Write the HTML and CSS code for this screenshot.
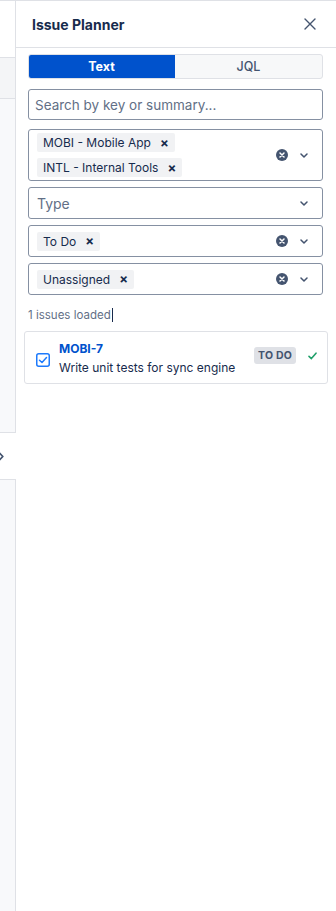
FILE: index.html
```html
<!DOCTYPE html>
<html>
<head>
<meta charset="utf-8">
<link rel="stylesheet" href="styles.css">
</head>
<body>
<div class="app">
  <div class="rail">
    <div class="rail-top"></div>
    <div class="rail-bar"></div>
    <div class="rail-box"></div>
    <div class="rail-gap"><svg class="rail-chev" width="5" height="9" viewBox="0 0 5 9"><path d="M0.5 1L3.8 4.5L0.5 8" stroke="#44546f" stroke-width="1.8" fill="none" stroke-linecap="round" stroke-linejoin="round"/></svg></div>
    <div class="rail-box2"></div>
  </div>
  <div class="panel">
    <div class="header">
      <span class="title">Issue Planner</span>
      <svg class="close" width="12" height="12" viewBox="0 0 12 12"><path d="M1 1L11 11M11 1L1 11" stroke="#44546f" stroke-width="1.4" stroke-linecap="round"/></svg>
    </div>
    <div class="body">
      <div class="tabs">
        <div class="tab tab-active">Text</div>
        <div class="tab">JQL</div>
      </div>
      <div class="field search"><span class="placeholder search-ph">Search by key or summary...</span></div>
      <div class="field select multi">
        <div class="tags">
          <span class="tag">MOBI - Mobile App<span class="tag-x">×</span></span>
          <span class="tag">INTL - Internal Tools<span class="tag-x">×</span></span>
        </div>
        <div class="icons">
          <svg class="clear" width="12" height="12" viewBox="0 0 12 12"><circle cx="6" cy="6" r="6" fill="#44546f"/><path d="M4 4L8 8M8 4L4 8" stroke="#fff" stroke-width="1.5" stroke-linecap="round"/></svg>
          <svg class="chev" width="8" height="5" viewBox="0 0 8 5"><path d="M1 1L4 4L7 1" stroke="#44546f" stroke-width="1.5" fill="none" stroke-linecap="round" stroke-linejoin="round"/></svg>
        </div>
      </div>
      <div class="field select">
        <div class="tags"><span class="placeholder">Type</span></div>
        <div class="icons">
          <svg class="chev" width="8" height="5" viewBox="0 0 8 5"><path d="M1 1L4 4L7 1" stroke="#44546f" stroke-width="1.5" fill="none" stroke-linecap="round" stroke-linejoin="round"/></svg>
        </div>
      </div>
      <div class="field select">
        <div class="tags"><span class="tag">To Do<span class="tag-x">×</span></span></div>
        <div class="icons">
          <svg class="clear" width="12" height="12" viewBox="0 0 12 12"><circle cx="6" cy="6" r="6" fill="#44546f"/><path d="M4 4L8 8M8 4L4 8" stroke="#fff" stroke-width="1.5" stroke-linecap="round"/></svg>
          <svg class="chev" width="8" height="5" viewBox="0 0 8 5"><path d="M1 1L4 4L7 1" stroke="#44546f" stroke-width="1.5" fill="none" stroke-linecap="round" stroke-linejoin="round"/></svg>
        </div>
      </div>
      <div class="field select">
        <div class="tags"><span class="tag">Unassigned<span class="tag-x">×</span></span></div>
        <div class="icons">
          <svg class="clear" width="12" height="12" viewBox="0 0 12 12"><circle cx="6" cy="6" r="6" fill="#44546f"/><path d="M4 4L8 8M8 4L4 8" stroke="#fff" stroke-width="1.5" stroke-linecap="round"/></svg>
          <svg class="chev" width="8" height="5" viewBox="0 0 8 5"><path d="M1 1L4 4L7 1" stroke="#44546f" stroke-width="1.5" fill="none" stroke-linecap="round" stroke-linejoin="round"/></svg>
        </div>
      </div>
      <div class="status">1 issues loaded<span class="caret"></span></div>
      <div class="card">
        <svg class="checkbox" width="14" height="14" viewBox="0 0 14 14"><rect x="0.75" y="0.75" width="12.5" height="12.5" rx="2" fill="#fff" stroke="#1d7afc" stroke-width="1.5"/><path d="M3.5 7.2L6 9.5L10.5 4.5" stroke="#1d7afc" stroke-width="1.5" fill="none" stroke-linecap="round" stroke-linejoin="round"/></svg>
        <div class="card-text">
          <div class="key">MOBI-7</div>
          <div class="summary">Write unit tests for sync engine</div>
        </div>
        <span class="lozenge">TO DO</span>
        <svg class="done" width="9" height="8" viewBox="0 0 9 8"><path d="M1 4.3L3.4 6.6L8 1.2" stroke="#22a06b" stroke-width="1.6" fill="none" stroke-linecap="round" stroke-linejoin="round"/></svg>
      </div>
    </div>
  </div>
</div>
</body>
</html>
```

FILE: styles.css
```css
* { box-sizing: border-box; }
html, body { margin: 0; padding: 0; background: #fff; }
body {
  font-family: Inter, "Noto Sans", "Liberation Sans", sans-serif;
  color: #172b4d;
}
.app {
  display: flex;
  height: 911px;
  border-top: 1px solid #dfe1e6;
}
.rail {
  width: 16px;
  display: flex;
  flex-direction: column;
  flex-shrink: 0;
}
.rail-top {
  height: 56px;
  border-right: 1px solid #dfe1e6;
}
.rail-bar {
  height: 42px;
  background: #f4f5f7;
  border-top: 1px solid #dfe1e6;
  border-bottom: 1px solid #dfe1e6;
  border-right: 1px solid #dfe1e6;
}
.rail-box {
  height: 334px;
  background: #f8f9fb;
  border-right: 1px solid #dfe1e6;
  border-bottom: 1px solid #dfe1e6;
}
.rail-gap {
  height: 46px;
  display: flex;
  align-items: center;
}
.rail-chev {
  margin-left: -1px;
}
.rail-box2 {
  flex: 1;
  background: #f8f9fb;
  border-top: 1px solid #dfe1e6;
  border-right: 1px solid #dfe1e6;
}
.panel {
  flex: 1;
  display: flex;
  flex-direction: column;
}
.header {
  height: 47px;
  border-bottom: 1px solid #dfe1e6;
  display: flex;
  align-items: center;
  justify-content: space-between;
  padding: 0 20px 0 16px;
}
.title {
  font-size: 14px;
  font-weight: 700;
  color: #172b4d;
}
.body {
  padding: 6px 13px 0 12px;
  display: flex;
  flex-direction: column;
}
.tabs {
  display: flex;
  height: 25px;
  border-radius: 3px;
  border: 1px solid #dfe1e6;
  background: #f7f8f9;
  overflow: hidden;
}
.tab {
  flex: 1;
  display: flex;
  align-items: center;
  justify-content: center;
  font-size: 12.5px;
  font-weight: 500;
  color: #44546f;
}
.tab-active {
  background: #0052cc;
  color: #fff;
  font-weight: 700;
  margin: -1px 0 -1px -1px;
}
.field {
  border: 1px solid #8590a2;
  border-radius: 3px;
  background: #fff;
}
.search {
  height: 31px;
  margin-top: 10px;
  display: flex;
  align-items: center;
  padding-left: 6px;
}
.placeholder {
  font-size: 14px;
  color: #626f86;
}
.search-ph { font-size: 13.5px; }
.select {
  display: flex;
  align-items: center;
  min-height: 32px;
  margin-top: 6px;
  padding: 2px 0 2px 8px;
}
.multi {
  margin-top: 9px;
  min-height: 52px;
}
.tags {
  flex: 1;
  display: flex;
  flex-direction: column;
  align-items: flex-start;
  gap: 6px;
}
.tag {
  display: inline-flex;
  align-items: center;
  height: 19px;
  padding: 0 6px;
  background: #f1f2f4;
  border-radius: 2px;
  font-size: 12px;
  color: #172b4d;
}
.tag-x {
  font-size: 13px;
  font-weight: 700;
  margin-left: 9px;
  color: #172b4d;
}
.icons {
  display: flex;
  align-items: center;
  padding-right: 14px;
}
.clear { margin-right: 12px; }
.status {
  margin-top: 13px;
  font-size: 11.5px;
  color: #626f86;
  display: flex;
  align-items: center;
  height: 14px;
}
.caret {
  display: inline-block;
  width: 1px;
  height: 14px;
  background: #172b4d;
  margin-left: 1px;
}
.card {
  margin: 9px -5px 0 -4px;
  height: 53px;
  border: 1px solid #dfe1e6;
  border-radius: 3px;
  display: flex;
  align-items: center;
  padding: 0 10px 0 11px;
}
.checkbox { margin-right: 9px; margin-top: 4px; }
.card-text {
  flex: 1;
  display: flex;
  flex-direction: column;
  gap: 4px;
}
.key {
  font-size: 12px;
  font-weight: 700;
  color: #0052cc;
}
.summary {
  font-size: 12px;
  color: #172b4d;
}
.lozenge {
  font-size: 10.5px;
  font-weight: 700;
  color: #44546f;
  background: #dfe1e6;
  border-radius: 3px;
  padding: 2px 4px;
  letter-spacing: 0.2px;
  margin-right: 12px;
  margin-top: -4px;
}
.done { margin-top: -3px; }
```
